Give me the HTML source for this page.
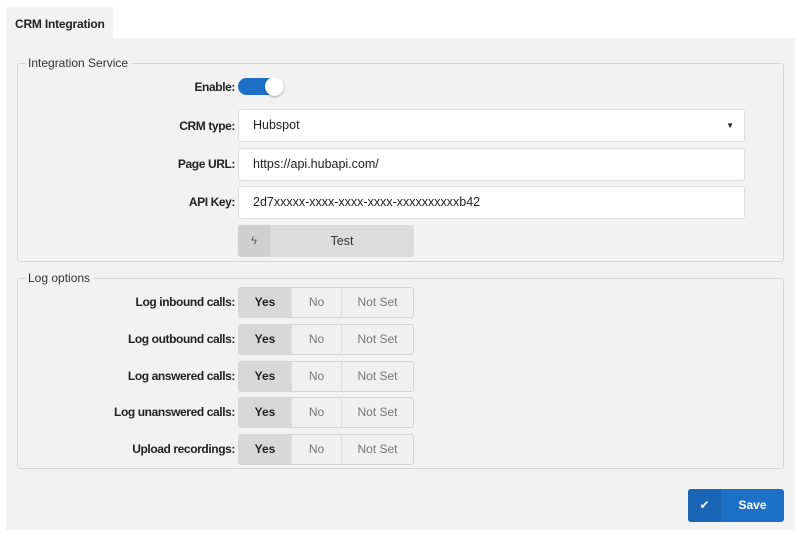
<!DOCTYPE html>
<html><head><meta charset="utf-8"><style>
*{box-sizing:border-box;margin:0;padding:0}
body{width:800px;height:535px;background:#fff;font-family:"Liberation Sans",sans-serif;font-size:12px;color:#222;position:relative;overflow:hidden}
.abs{position:absolute}
.tab{left:6px;top:7px;width:107px;height:32px;background:#f2f2f2;font-weight:bold;font-size:12px;padding:10px 0 0 9px;letter-spacing:-0.2px}
.panel{left:6px;top:38px;width:789px;height:492px;background:#f2f2f2}
.fs{border:1px solid #d6d6d6;border-radius:3px;left:17px;width:767px}
.legend{background:#f2f2f2;padding:0 3px;font-size:12px;color:#333}
.lbl{width:200px;left:35px;text-align:right;font-weight:bold;font-size:12px;letter-spacing:-0.4px}
.inp{left:238px;width:507px;height:33px;background:#fff;border:1px solid #ddd;border-radius:3px;padding:0 0 0 14px;line-height:31px;font-size:12.5px}
.seg{left:238px;width:176px;height:31px;border:1px solid #d4d4d4;border-radius:3px;display:flex;overflow:hidden;background:#f0f0f0}
.seg div{text-align:center;line-height:29px;color:#777}
.seg .y{width:53px;background:#d8d8d8;color:#222;font-weight:bold;border-right:1px solid #ddd}
.seg .n{width:50px;border-right:1px solid #ddd}
.seg .s{flex:1}
</style></head><body>
<div class="abs tab">CRM Integration</div>
<div class="abs panel"></div>
<div class="abs fs" style="top:63px;height:199px"></div>
<div class="abs legend" style="left:25px;top:56px">Integration Service</div>
<div class="abs lbl" style="top:80px">Enable:</div>
<div class="abs" style="left:238px;top:78px;width:46px;height:17px;border-radius:9px;background:#1e6fc8"></div>
<div class="abs" style="left:265px;top:77px;width:19px;height:19px;border-radius:50%;background:#fff;box-shadow:0 1px 2px rgba(0,0,0,.3)"></div>
<div class="abs lbl" style="top:119px">CRM type:</div>
<div class="abs inp" style="top:109px">Hubspot<span style="position:absolute;right:10px;top:0;font-size:8px">&#9660;</span></div>
<div class="abs lbl" style="top:157px">Page URL:</div>
<div class="abs inp" style="top:148px">https://api.hubapi.com/</div>
<div class="abs lbl" style="top:195px">API Key:</div>
<div class="abs inp" style="top:186px">2d7xxxxx-xxxx-xxxx-xxxx-xxxxxxxxxxb42</div>
<div class="abs" style="left:238px;top:225px;width:176px;height:32px;background:#dcdcdc;border-radius:3px;overflow:hidden">
<div style="position:absolute;left:0;top:0;width:32px;height:32px;background:#cfcfcf;text-align:center;line-height:32px;font-size:11px;color:#555">ϟ</div>
<div style="position:absolute;left:32px;right:0;top:0;line-height:32px;text-align:center;color:#333;font-size:12.5px">Test</div></div>
<div class="abs fs" style="top:278px;height:191px"></div>
<div class="abs legend" style="left:25px;top:271px">Log options</div>
<div class="abs lbl" style="top:295px">Log inbound calls:</div>
<div class="abs seg" style="top:287px"><div class="y">Yes</div><div class="n">No</div><div class="s">Not Set</div></div>
<div class="abs lbl" style="top:332px">Log outbound calls:</div>
<div class="abs seg" style="top:324px"><div class="y">Yes</div><div class="n">No</div><div class="s">Not Set</div></div>
<div class="abs lbl" style="top:369px">Log answered calls:</div>
<div class="abs seg" style="top:361px"><div class="y">Yes</div><div class="n">No</div><div class="s">Not Set</div></div>
<div class="abs lbl" style="top:405px">Log unanswered calls:</div>
<div class="abs seg" style="top:397px"><div class="y">Yes</div><div class="n">No</div><div class="s">Not Set</div></div>
<div class="abs lbl" style="top:442px">Upload recordings:</div>
<div class="abs seg" style="top:434px"><div class="y">Yes</div><div class="n">No</div><div class="s">Not Set</div></div>
<div class="abs" style="left:688px;top:489px;width:96px;height:33px;background:#1e6fc8;border-radius:3px;overflow:hidden;color:#fff">
<div style="position:absolute;left:0;top:0;width:33px;height:33px;background:#1a64b6;text-align:center;line-height:33px;font-size:12px">&#10004;</div>
<div style="position:absolute;left:33px;right:0;top:0;line-height:33px;text-align:center;font-weight:bold">Save</div></div>
</body></html>
